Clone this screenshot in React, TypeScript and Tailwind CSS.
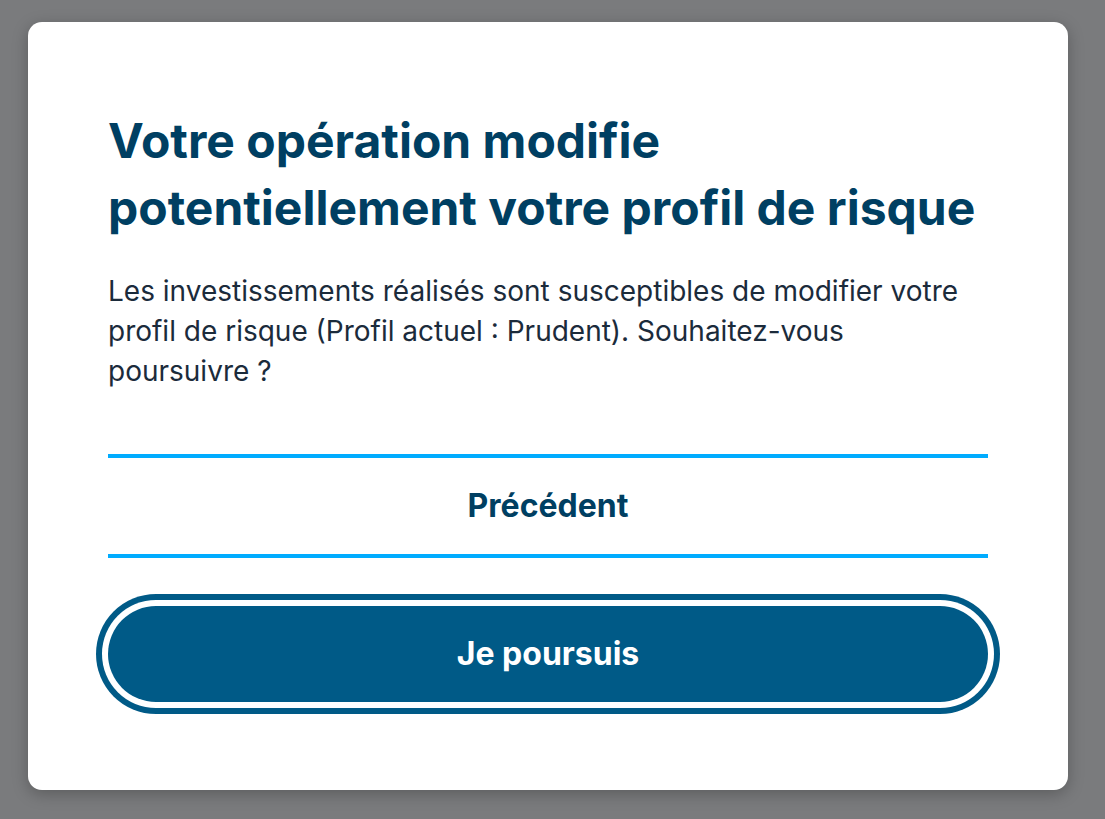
export default function App() {
  return (
    <div className="min-h-screen bg-[#7a7b7d] pt-[22px] pl-[28px] font-['Inter',sans-serif]">
      <div className="w-[1040px] h-[768px] rounded-[14px] bg-white px-[80px] pt-[85px] shadow-[0_4px_16px_rgba(0,0,0,0.25)]">
        <h1 className="text-[48px] leading-[67px] font-bold text-[#003f62]">
          Votre opération modifie potentiellement votre profil de risque
        </h1>
        <p className="mt-[30px] text-[28px] leading-[40px] text-[#1b2b3b]">
          Les investissements réalisés sont susceptibles de modifier votre profil de risque (Profil actuel : Prudent). Souhaitez-vous poursuivre ?
        </p>
        <div className="mt-[63px] border-y-4 border-[#00acff]">
          <button className="w-full h-[96px] text-[32px] font-bold text-[#003f62]">Précédent</button>
        </div>
        <button className="mt-[48px] w-full h-[96px] rounded-full bg-[#005a87] text-white text-[32px] font-bold ring-[6px] ring-[#005a87] ring-offset-[6px] ring-offset-white">
          Je poursuis
        </button>
      </div>
    </div>
  )
}
